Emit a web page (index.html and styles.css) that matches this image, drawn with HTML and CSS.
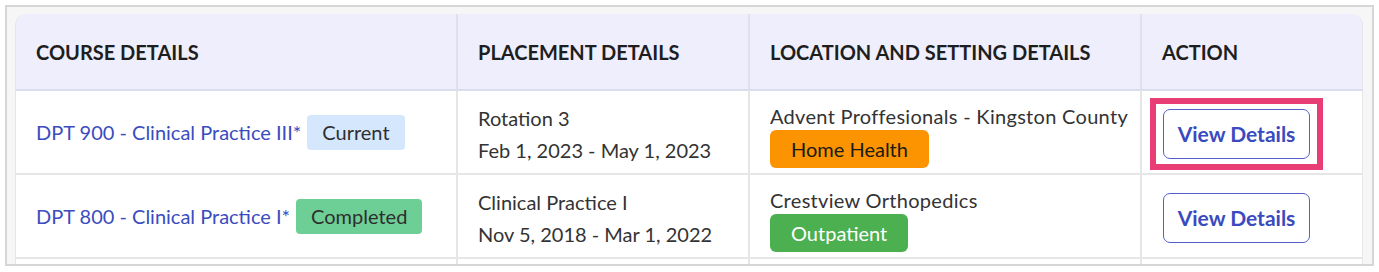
FILE: index.html
```html
<!DOCTYPE html>
<html>
<head>
<meta charset="utf-8">
<link rel="stylesheet" href="styles.css">
</head>
<body>
<div class="frame">
  <table class="grid">
    <colgroup>
      <col class="c1"><col class="c2"><col class="c3"><col class="c4">
    </colgroup>
    <thead>
      <tr>
        <th>COURSE DETAILS</th>
        <th>PLACEMENT DETAILS</th>
        <th>LOCATION AND SETTING DETAILS</th>
        <th>ACTION</th>
      </tr>
    </thead>
    <tbody>
      <tr>
        <td><a class="course">DPT 900 - Clinical Practice III*</a><span class="tag current">Current</span></td>
        <td class="placecell"><div class="line">Rotation 3</div><div class="line">Feb 1, 2023 - May 1, 2023</div></td>
        <td class="loccell"><div class="loc">Advent Proffesionals - Kingston County</div><span class="setting home">Home Health</span></td>
        <td class="actcell"><button class="view highlighted">View Details</button></td>
      </tr>
      <tr>
        <td><a class="course">DPT 800 - Clinical Practice I*</a><span class="tag done">Completed</span></td>
        <td class="placecell"><div class="line">Clinical Practice I</div><div class="line">Nov 5, 2018 - Mar 1, 2022</div></td>
        <td class="loccell"><div class="loc">Crestview Orthopedics</div><span class="setting out">Outpatient</span></td>
        <td class="actcell"><button class="view">View Details</button></td>
      </tr>
      <tr class="cut">
        <td></td><td></td><td></td><td></td>
      </tr>
    </tbody>
  </table>
</div>
</body>
</html>
```

FILE: styles.css
```css
html, body {
  margin: 0;
  padding: 0;
  background: #ffffff;
}
body {
  font-family: "Lato", "Noto Sans", sans-serif;
  padding: 5px 5px 0 5px;
}
.frame {
  width: 1369px;
  height: 261px;
  box-sizing: border-box;
  border: 2px solid #d6d6d6;
  background: #f6f6f6;
  padding: 7px 8px 0 8px;
  overflow: hidden;
}
.grid {
  width: 1348px;
  border-collapse: separate;
  border-spacing: 0;
  table-layout: fixed;
  background: #fff;
  border-radius: 11px 11px 0 0;
}
.c1 { width: 441px; }
.c2 { width: 292px; }
.c3 { width: 392px; }
.c4 { width: 223px; }
th {
  background: #eeeefc;
  height: 77px;
  box-sizing: border-box;
  text-align: left;
  padding: 0 0 0 20px;
  font-size: 20px;
  font-weight: 700;
  color: #1e1e1e;
  border-bottom: 2px solid #dcdcef;
  border-left: 2px solid #e0e0ea;
}
th:first-child { border-top-left-radius: 11px; border-left: 1px solid #e6e6ea; }
th:last-child { border-top-right-radius: 11px; border-right: 1px solid #e6e6ea; }
td {
  height: 84px;
  box-sizing: border-box;
  padding: 0 0 0 20px;
  border-bottom: 2px solid #e6e6e6;
  border-left: 2px solid #e6e6e6;
  vertical-align: middle;
  font-size: 20px;
  color: #333;
}
td:first-child { border-left: 1px solid #e6e6e6; }
td:last-child { border-right: 1px solid #e6e6e6; }
.course {
  color: #3b4cbf;
  text-decoration: none;
}
.tag {
  display: inline-block;
  margin-left: 6px;
  padding: 0 15px;
  height: 35px;
  line-height: 35px;
  border-radius: 4px;
  color: #2e2e2e;
}
.current { background: #d5e7fd; }
.done { background: #6dcf95; }
.placecell { padding-top: 3px; }
.line {
  line-height: 32px;
}
.loccell { padding-top: 6px; }
.loc {
  line-height: 26px;
  letter-spacing: 0.3px;
}
.setting {
  display: block;
  width: fit-content;
  margin-top: 1px;
  padding: 0 21px;
  height: 38px;
  line-height: 38px;
  border-radius: 6px;
}
.home { background: #fb9400; color: #1a1a1a; }
.out { background: #4caf50; color: #ffffff; }
.actcell { padding-top: 3px; }
.view {
  position: relative;
  display: block;
  width: 147px;
  height: 50px;
  border: 1.5px solid #5361c9;
  border-radius: 7px;
  background: #fff;
  color: #3a4abf;
  font-family: inherit;
  font-size: 21px;
  font-weight: 700;
  padding: 0;
  margin-left: 1px;
}
.highlighted::after {
  content: "";
  position: absolute;
  left: -14px;
  right: -14px;
  top: -12px;
  bottom: -12px;
  border: 6px solid #e83e75;
}
.cut td { height: 20px; }
```
